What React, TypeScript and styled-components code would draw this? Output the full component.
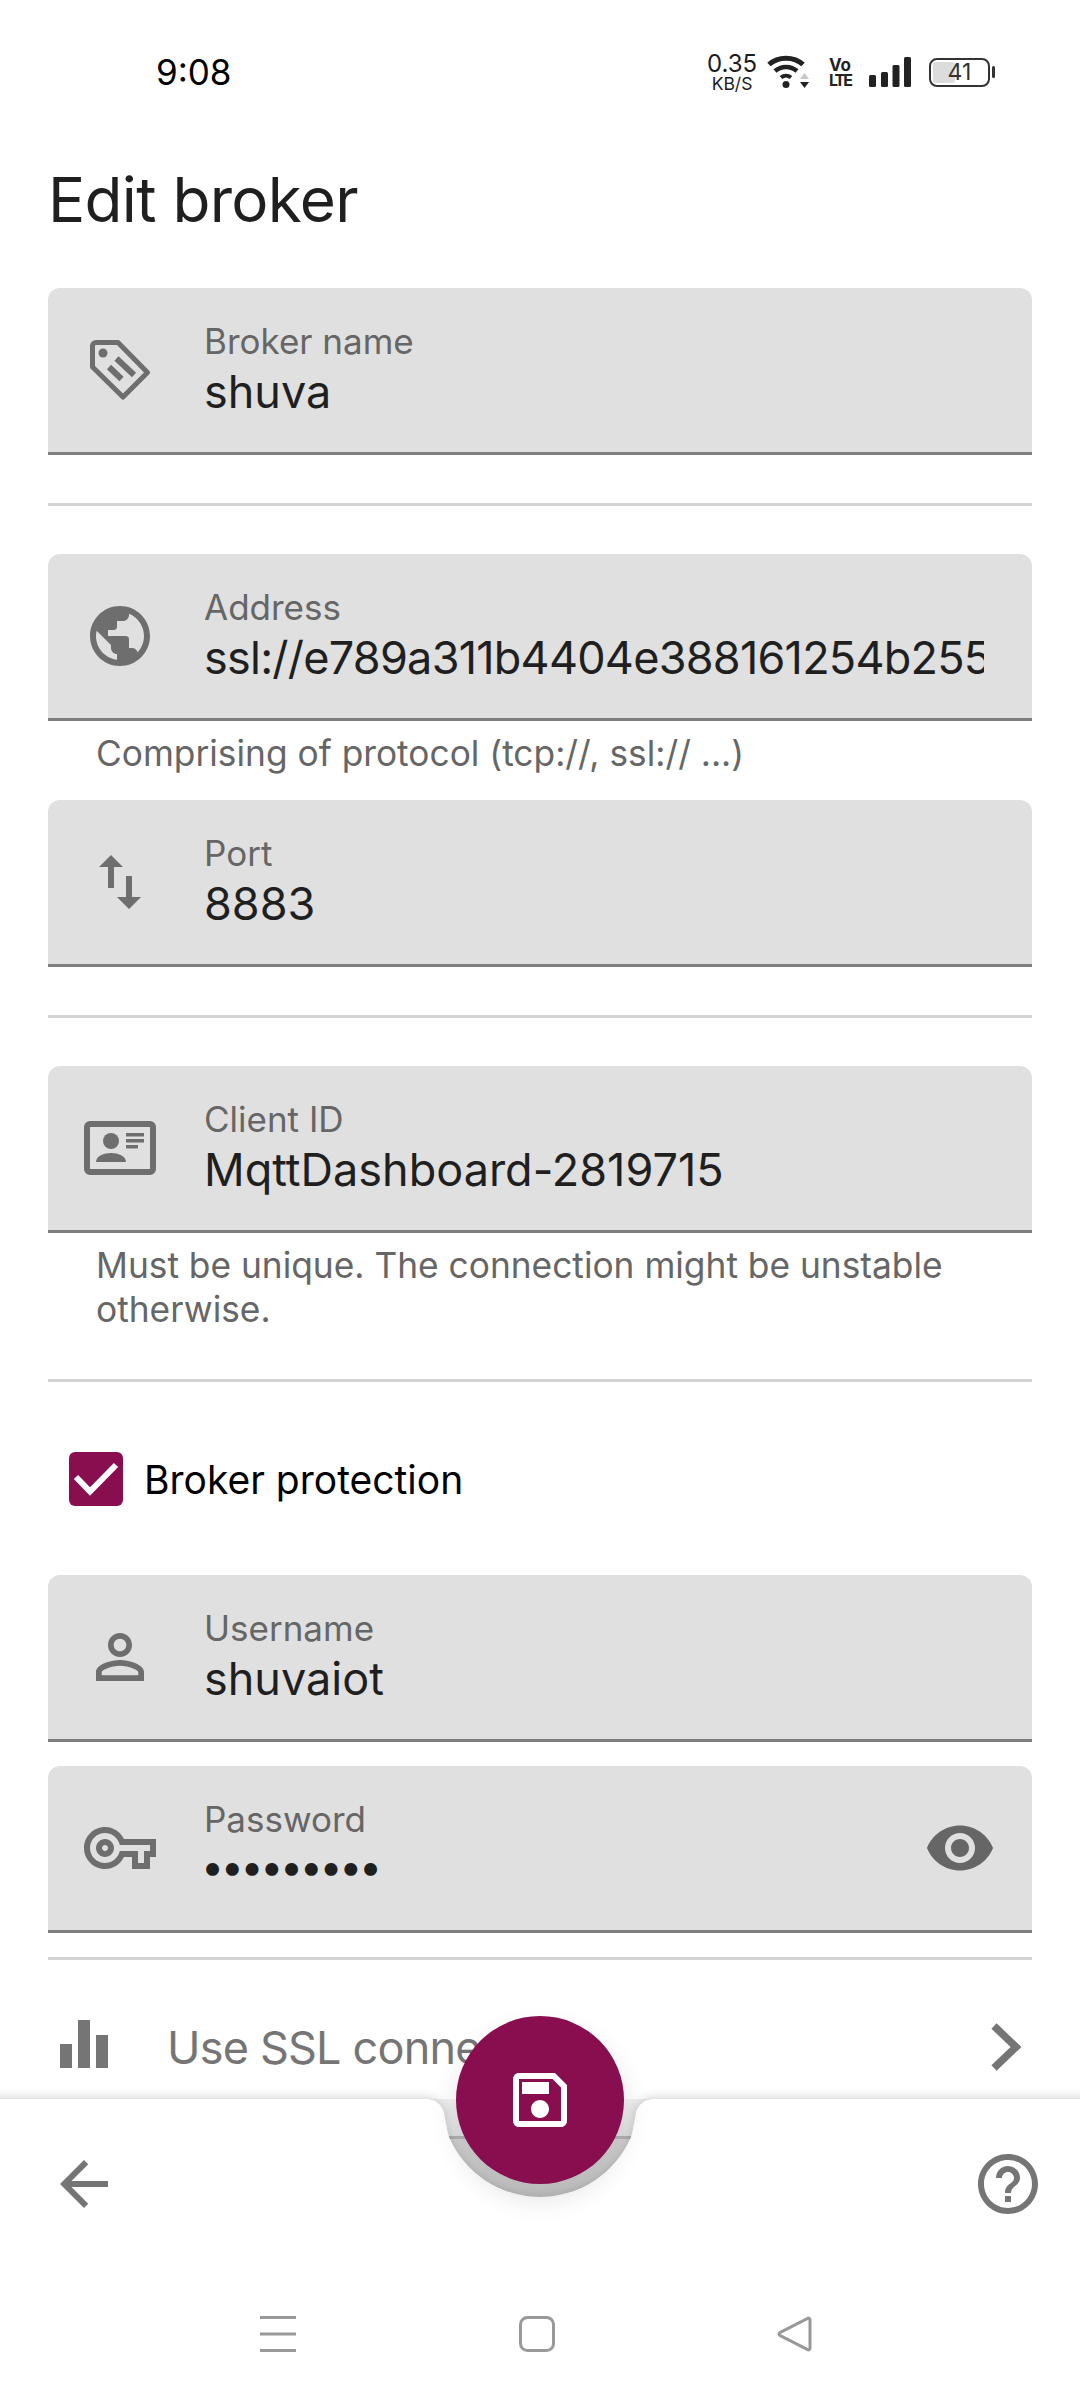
import React from "react";
import styled, { createGlobalStyle } from "styled-components";

const FONT = `"Inter", "Noto Sans", sans-serif`;
const BRAND = "#880e4f";
const ICON = "#6e6e6e";

const Global = createGlobalStyle`
  html, body { margin: 0; padding: 0; background: #fff; }
  body { font-family: ${FONT}; }
`;

const Page = styled.div`
  position: relative;
  width: 1080px;
  height: 2400px;
  display: flex;
  flex-direction: column;
  overflow: hidden;
  background: #fff;
`;

const StatusBar = styled.div`
  height: 144px;
  flex: none;
  display: flex;
  align-items: center;
  justify-content: space-between;
  padding: 0 90px 0 156px;
  box-sizing: border-box;
`;
const Clock = styled.span`
  font-size: 35px;
  color: #000;
`;
const StatusIcons = styled.div`
  display: flex;
  align-items: center;
`;
const Speed = styled.div`
  width: 50px;
  display: flex;
  flex-direction: column;
  align-items: center;
  color: #1c1c1c;
  margin-right: 10px;
`;
const SpeedValue = styled.span`
  font-size: 24px;
  line-height: 22px;
`;
const SpeedUnit = styled.span`
  font-size: 17.5px;
  line-height: 17px;
`;
const Volte = styled.div`
  width: 22px;
  margin: 0 18px 0 20px;
  display: flex;
  flex-direction: column;
  align-items: center;
  color: #222;
  font-weight: 700;
`;
const VolteTop = styled.span`
  font-size: 17px;
  line-height: 16px;
`;
const VolteBottom = styled.span`
  font-size: 16px;
  line-height: 15px;
  letter-spacing: -2px;
`;
const Battery = styled.div`
  position: relative;
  width: 61px;
  height: 29px;
  margin-left: 18px;
  box-sizing: border-box;
  border: 2.5px solid #333;
  border-radius: 8px;
  display: flex;
  align-items: center;
  justify-content: center;
  font-size: 23px;
  color: #333;
  &::before {
    content: "";
    position: absolute;
    left: 2px;
    top: 2px;
    bottom: 2px;
    width: 22px;
    border-radius: 3px;
    background: #dcdcdc;
    z-index: 0;
  }
  &::after {
    content: "";
    position: absolute;
    right: -7px;
    top: 6px;
    width: 3px;
    height: 12px;
    border-radius: 2px;
    background: #333;
  }
`;
const BatteryLevel = styled.span`
  position: relative;
  z-index: 1;
`;

const Title = styled.h1`
  margin: 16px 0 48px 48px;
  height: 80px;
  flex: none;
  font-weight: 400;
  font-size: 62px;
  line-height: 80px;
  letter-spacing: -0.7px;
  color: #1f1f1f;
`;

const Form = styled.div`
  flex: 1;
  min-height: 0;
  overflow: hidden;
  padding: 0 48px;
  display: flex;
  flex-direction: column;
`;

const Field = styled.div<{ $after?: number }>`
  flex: none;
  height: 167px;
  box-sizing: border-box;
  background: #e0e0e0;
  border-radius: 12px 12px 0 0;
  border-bottom: 3px solid #7f7f7f;
  display: flex;
  align-items: center;
  padding: 0 36px;
  margin-bottom: ${p => p.$after ?? 0}px;
`;
const FieldIcon = styled.svg`
  width: 72px;
  height: 72px;
  flex: none;
  fill: ${ICON};
  margin-right: 48px;
`;
const FieldBody = styled.div`
  flex: 1;
  min-width: 0;
  padding-bottom: 7px;
  margin-right: 12px;
`;
const Label = styled.div`
  font-size: 35px;
  line-height: 50px;
  margin: 2px 0 -2px;
  color: #666;
`;
const Value = styled.div<{ $tight?: boolean }>`
  font-size: 45px;
  line-height: 56px;
  letter-spacing: ${p => (p.$tight ? "-0.75px" : "0")};
  color: #1f1f1f;
  white-space: nowrap;
  overflow: hidden;
`;
const Dots = styled.div`
  font-size: 41px;
  line-height: 48px;
  margin: 0 0 8px -3px;
  letter-spacing: -3.3px;
  color: #1f1f1f;
  white-space: nowrap;
`;
const EyeIcon = styled.svg`
  width: 72px;
  height: 72px;
  flex: none;
  fill: #666;
`;

const Divider = styled.div<{ $top: number; $bottom: number }>`
  flex: none;
  height: 3px;
  background: #d3d3d3;
  margin: ${p => p.$top}px 0 ${p => p.$bottom}px;
`;
const Helper = styled.div<{ $after: number }>`
  flex: none;
  font-size: 35.3px;
  line-height: 44px;
  color: #666;
  padding: 11px 48px 0;
  margin-bottom: ${p => p.$after}px;
  margin-right: -20px;
`;

const CheckRow = styled.div`
  flex: none;
  display: flex;
  align-items: center;
  padding-left: 21px;
  height: 54px;
  margin-bottom: 69px;
`;
const CheckBox = styled.div`
  width: 54px;
  height: 54px;
  border-radius: 6px;
  background: ${BRAND};
  display: flex;
  align-items: center;
  justify-content: center;
  margin-right: 21px;
`;
const CheckLabel = styled.span`
  font-size: 39px;
  color: #000;
`;

const LinkRow = styled.div`
  flex: none;
  height: 174px;
  display: flex;
  align-items: center;
  color: #757575;
`;
const RowIcon = styled.svg`
  width: 72px;
  height: 72px;
  flex: none;
  fill: #757575;
`;
const LinkText = styled.span`
  flex: 1;
  font-size: 45px;
  letter-spacing: -0.8px;
  margin-left: 47px;
  white-space: nowrap;
`;
const Chevron = styled.svg`
  width: 72px;
  height: 72px;
  flex: none;
  margin-right: -14px;
`;

const BottomBar = styled.div`
  position: relative;
  flex: none;
  height: 301px;
  display: flex;
  flex-direction: column;
`;
const BarShape = styled.svg`
  position: absolute;
  left: 0;
  top: 0;
  width: 1080px;
  height: 301px;
  overflow: visible;
`;
const Fab = styled.div`
  position: absolute;
  left: 456px;
  top: -83px;
  width: 168px;
  height: 168px;
  border-radius: 50%;
  background: ${BRAND};
  display: flex;
  align-items: center;
  justify-content: center;
  box-shadow: 0 14px 28px rgba(0, 0, 0, 0.12);
`;
const SaveIcon = styled.svg`
  width: 72px;
  height: 72px;
  fill: #fff;
`;
const Actions = styled.div`
  position: relative;
  flex: none;
  height: 170px;
  padding: 49px 36px 0 48px;
  box-sizing: border-box;
  display: flex;
  justify-content: space-between;
  align-items: flex-start;
`;
const NavBar = styled.div`
  position: relative;
  flex: 1;
  display: grid;
  grid-template-columns: 259px 258px 1fr;
  padding: 47px 0 0 260px;
  box-sizing: border-box;
`;
const NavIcon = styled.svg`
  width: 36px;
  height: 36px;
  fill: none;
  stroke: #999;
  stroke-width: 3;
`;

const TagPath = () => (
  <>
    <path d="M12 8.500h22L63.500 38.500 39 63 8.500 33V12a3.500 3.500 0 0 1 3.500-3.500z" fill="none" stroke={ICON} strokeWidth="5" strokeLinejoin="round" />
    <circle cx="19" cy="19" r="4.500" />
    <path d="M25 33l12.500 12M32.500 24.500L50 41" fill="none" stroke={ICON} strokeWidth="6" />
  </>
);

const P = {
  globe: "M12 2C6.48 2 2 6.48 2 12s4.48 10 10 10 10-4.48 10-10S17.52 2 12 2zm-1 17.93c-3.95-.49-7-3.85-7-7.93 0-.62.08-1.21.21-1.79L9 15v1c0 1.1.9 2 2 2v1.93zm6.9-2.54c-.26-.81-1-1.39-1.9-1.39h-1v-3c0-.55-.45-1-1-1H8v-2h2c.55 0 1-.45 1-1V7h2c1.1 0 2-.9 2-2v-.41c2.93 1.19 5 4.06 5 7.41 0 2.08-.8 3.97-2.1 5.39z",
  swap: "M16 17.01V10h-2v7.01h-3L15 21l4-3.99h-3zM9 3L5 6.99h3V14h2V6.99h3L9 3z",
  person: "M12 5.9c1.16 0 2.1.94 2.1 2.1s-.94 2.1-2.1 2.1S9.9 9.16 9.9 8s.94-2.1 2.1-2.1m0 9c2.97 0 6.1 1.46 6.1 2.1v1.1H5.9V17c0-.64 3.13-2.1 6.1-2.1M12 4C9.79 4 8 5.79 8 8s1.79 4 4 4 4-1.79 4-4-1.79-4-4-4zm0 9c-2.67 0-8 1.34-8 4v3h16v-3c0-2.66-5.33-4-8-4z",
  key: "M22 19h-6v-4h-2.68c-1.14 2.42-3.6 4-6.32 4-3.86 0-7-3.14-7-7s3.14-7 7-7c2.72 0 5.17 1.58 6.32 4H24v6h-2v4zm-4-2h2v-4h2v-2H11.94l-.23-.67C11.01 8.34 9.11 7 7 7c-2.76 0-5 2.24-5 5s2.24 5 5 5c2.11 0 4.01-1.34 4.71-3.33l.23-.67H18v4zM7 15c-1.65 0-3-1.35-3-3s1.35-3 3-3 3 1.35 3 3-1.35 3-3 3zm0-4c-.55 0-1 .45-1 1s.45 1 1 1 1-.45 1-1-.45-1-1-1z",
  eye: "M12 4.5C7 4.5 2.73 7.61 1 12c1.73 4.39 6 7.5 11 7.5s9.27-3.11 11-7.5c-1.73-4.39-6-7.5-11-7.5zM12 17c-2.76 0-5-2.24-5-5s2.24-5 5-5 5 2.24 5 5-2.24 5-5 5zm0-8c-1.66 0-3 1.34-3 3s1.34 3 3 3 3-1.34 3-3-1.34-3-3-3z",
  save: "M17 3H5c-1.11 0-2 .9-2 2v14c0 1.1.89 2 2 2h14c1.1 0 2-.9 2-2V7l-4-4zm2 16H5V5h11.17L19 7.83V19zm-7-7c-1.66 0-3 1.34-3 3s1.34 3 3 3 3-1.34 3-3-1.34-3-3-3zM6 6h9v4H6z",
  back: "M20 11H7.83l5.59-5.59L12 4l-8 8 8 8 1.41-1.41L7.83 13H20v-2z",
  help: "M11 18h2v-2h-2v2zm1-16C6.48 2 2 6.48 2 12s4.48 10 10 10 10-4.48 10-10S17.52 2 12 2zm0 18c-4.41 0-8-3.59-8-8s3.59-8 8-8 8 3.59 8 8-3.59 8-8 8zm0-14c-2.21 0-4 1.79-4 4h2c0-1.1.9-2 2-2s2 .9 2 2c0 2-3 1.75-3 5h2c0-2.25 3-2.5 3-5 0-2.21-1.79-4-4-4z",
};

const NOTCH_CURVE =
  "C436 0 442 6 444 14C446 24 447 32 449 38A99 99 0 0 0 631 38C633 32 634 24 636 14C638 6 644 0 655 0";

export default function App() {
  return (
    <Page>
      <Global />
      <StatusBar>
        <Clock>9:08</Clock>
        <StatusIcons>
          <Speed>
            <SpeedValue>0.35</SpeedValue>
            <SpeedUnit>KB/S</SpeedUnit>
          </Speed>
          <svg width="42" height="34" viewBox="0 0 42 34">
            <path d="M2 9.500C11 1 27 1 36 9.500" fill="none" stroke="#222" strokeWidth="5" />
            <path d="M8 16C14 10.500 24 10.500 30 16" fill="none" stroke="#222" strokeWidth="4.500" />
            <path d="M14 22.500C17 20 21 20 24 22.500" fill="none" stroke="#222" strokeWidth="4" />
            <circle cx="19" cy="29.500" r="3.500" fill="#222" />
            <path d="M33 24l4.500-6 4.500 6z" fill="#c8c8c8" />
            <path d="M33 27l4.500 6 4.500-6z" fill="#222" />
          </svg>
          <Volte>
            <VolteTop>Vo</VolteTop>
            <VolteBottom>LTE</VolteBottom>
          </Volte>
          <svg width="42" height="30" viewBox="0 0 42 30" fill="#222">
            <rect x="0" y="18" width="7" height="12" rx="1.500" />
            <rect x="12" y="15" width="7" height="15" rx="1.500" />
            <rect x="23.500" y="8" width="7" height="22" rx="1.500" />
            <rect x="35" y="0" width="7" height="30" rx="1.500" />
          </svg>
          <Battery>
            <BatteryLevel>41</BatteryLevel>
          </Battery>
        </StatusIcons>
      </StatusBar>

      <Title>Edit broker</Title>

      <Form>
        <Field>
          <FieldIcon viewBox="0 0 72 72"><TagPath /></FieldIcon>
          <FieldBody>
            <Label>Broker name</Label>
            <Value>shuva</Value>
          </FieldBody>
        </Field>
        <Divider $top={48} $bottom={48} />
        <Field>
          <FieldIcon viewBox="0 0 24 24"><path d={P.globe} /></FieldIcon>
          <FieldBody>
            <Label>Address</Label>
            <Value $tight>ssl://e789a311b4404e388161254b2557c1f0</Value>
          </FieldBody>
        </Field>
        <Helper $after={24}>Comprising of protocol (tcp://, ssl:// ...)</Helper>
        <Field>
          <FieldIcon viewBox="0 0 24 24"><path d={P.swap} /></FieldIcon>
          <FieldBody>
            <Label>Port</Label>
            <Value>8883</Value>
          </FieldBody>
        </Field>
        <Divider $top={48} $bottom={48} />
        <Field>
          <FieldIcon viewBox="0 0 72 72">
            <rect x="3" y="12" width="66" height="48" rx="3" fill="none" stroke={ICON} strokeWidth="6" />
            <circle cx="27" cy="29" r="8" />
            <path d="M12 50c0-6 8-9 15-9s15 3 15 9z" />
            <rect x="42" y="21" width="18" height="3.500" />
            <rect x="42" y="27" width="18" height="3.500" />
            <rect x="42" y="33" width="12" height="3.500" />
          </FieldIcon>
          <FieldBody>
            <Label>Client ID</Label>
            <Value>MqttDashboard-2819715</Value>
          </FieldBody>
        </Field>
        <Helper $after={0}>Must be unique. The connection might be unstable otherwise.</Helper>
        <Divider $top={47} $bottom={70} />
        <CheckRow>
          <CheckBox>
            <svg width="54" height="54" viewBox="0 0 54 54">
              <path d="M7 25l14 14.500L47 13" fill="none" stroke="#fff" strokeWidth="6" />
            </svg>
          </CheckBox>
          <CheckLabel>Broker protection</CheckLabel>
        </CheckRow>
        <Field $after={24}>
          <FieldIcon viewBox="0 0 24 24"><path d={P.person} /></FieldIcon>
          <FieldBody>
            <Label>Username</Label>
            <Value>shuvaiot</Value>
          </FieldBody>
        </Field>
        <Field>
          <FieldIcon viewBox="0 0 24 24"><path d={P.key} /></FieldIcon>
          <FieldBody>
            <Label>Password</Label>
            <Dots>•••••••••</Dots>
          </FieldBody>
          <EyeIcon viewBox="0 0 24 24"><path d={P.eye} /></EyeIcon>
        </Field>
        <Divider $top={24} $bottom={0} />
        <LinkRow>
          <RowIcon viewBox="0 0 72 72">
            <rect x="12" y="33" width="12" height="24" />
            <rect x="30" y="9" width="12" height="48" />
            <rect x="48" y="24" width="12" height="33" />
          </RowIcon>
          <LinkText>Use SSL connection</LinkText>
          <Chevron viewBox="0 0 72 72">
            <path d="M20 15l22 21-22 21" fill="none" stroke="#757575" strokeWidth="7.500" />
          </Chevron>
        </LinkRow>
      </Form>

      <BottomBar>
        <BarShape viewBox="0 0 1080 301">
          <defs>
            <linearGradient id="notchFill" x1="0" y1="0" x2="0" y2="1">
              <stop offset="0" stopColor="#f1f1f1" />
              <stop offset="0.38" stopColor="#e2e2e2" />
              <stop offset="0.4" stopColor="#d5d5d5" />
              <stop offset="1" stopColor="#d0d0d0" />
            </linearGradient>
          </defs>
          <path d={`M425 0${NOTCH_CURVE}Z`} fill="url(#notchFill)" />
          <rect x="448" y="37" width="184" height="3" fill="#b4b4b4" />
          <path
            d={`M-20 0H425${NOTCH_CURVE}H1100V301H-20Z`}
            fill="#fff"
            style={{ filter: "drop-shadow(0 -2px 5px rgba(0,0,0,0.16))" }}
          />
        </BarShape>
        <Fab>
          <SaveIcon viewBox="0 0 24 24"><path d={P.save} /></SaveIcon>
        </Fab>
        <Actions>
          <RowIcon viewBox="0 0 24 24"><path d={P.back} /></RowIcon>
          <RowIcon viewBox="0 0 24 24"><path d={P.help} /></RowIcon>
        </Actions>
        <NavBar>
          <NavIcon viewBox="0 0 36 36">
            <path d="M0 1.500h36M0 18h36M0 34.500h36" />
          </NavIcon>
          <NavIcon viewBox="0 0 36 36">
            <rect x="1.500" y="1.500" width="33" height="33" rx="7" />
          </NavIcon>
          <NavIcon viewBox="0 0 36 36">
            <path d="M33 3.500v29a1.500 1.500 0 0 1-2.300 1.200L2.800 19.300a1.500 1.500 0 0 1 0-2.600L30.700 2.300A1.500 1.500 0 0 1 33 3.500z" strokeLinejoin="round" />
          </NavIcon>
        </NavBar>
      </BottomBar>
    </Page>
  );
}
